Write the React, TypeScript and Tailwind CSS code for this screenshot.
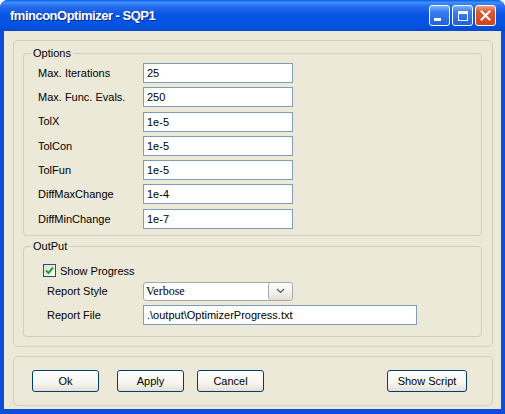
import React from 'react';

const fields = [
  { label: 'Max. Iterations', value: '25' },
  { label: 'Max. Func. Evals.', value: '250' },
  { label: 'TolX', value: '1e-5' },
  { label: 'TolCon', value: '1e-5' },
  { label: 'TolFun', value: '1e-5' },
  { label: 'DiffMaxChange', value: '1e-4' },
  { label: 'DiffMinChange', value: '1e-7' },
];

function CaptionButton({ kind }: { kind: 'min' | 'max' | 'close' }) {
  const bg =
    kind === 'close'
      ? 'bg-[linear-gradient(180deg,#f0a080_0%,#e0582f_30%,#d2421c_100%)]'
      : 'bg-[linear-gradient(180deg,#7fb2ff_0%,#3b7ff0_30%,#1f5fe0_100%)]';
  return (
    <div className={`flex h-[21px] w-[21px] items-center justify-center rounded-[3px] border border-white ${bg}`}>
      {kind === 'min' && <div className="mt-[8px] mr-[4px] h-[3px] w-[7px] bg-white" />}
      {kind === 'max' && <div className="h-[10px] w-[10px] border border-t-[3px] border-white" />}
      {kind === 'close' && (
        <svg width="11" height="11" viewBox="0 0 11 11">
          <path d="M1.5 1.5 L9.5 9.5 M9.5 1.5 L1.5 9.5" stroke="white" strokeWidth="2" strokeLinecap="square" />
        </svg>
      )}
    </div>
  );
}

function XpButton({ children, className = '' }: { children: React.ReactNode; className?: string }) {
  return (
    <button
      className={`h-[22px] rounded-[3px] border border-[#003c74] bg-[linear-gradient(180deg,#ffffff_0%,#f6f5f0_60%,#e3e0d4_100%)] text-[11px] text-black ${className}`}
    >
      {children}
    </button>
  );
}

export default function App() {
  return (
    <div className="h-[414px] w-[505px] bg-white font-['Liberation_Sans',Arial,sans-serif] text-[11px] text-black">
      <div className="flex h-full flex-col rounded-t-[8px] bg-[#0b4fd8]">
        {/* Title bar */}
        <div className="flex h-[31px] shrink-0 items-center rounded-t-[8px] bg-[linear-gradient(180deg,#0a5ee8_0%,#3d8ffa_8%,#2a6eec_20%,#0a56e4_45%,#0354e3_80%,#0048d2_100%)] pl-[10px] pr-[9px]">
          <span className="flex-1 text-[13px] font-bold tracking-[-0.5px] text-white [text-shadow:1px_1px_0_#0a2a8a]">
            fminconOptimizer - SQP1
          </span>
          <div className="flex gap-[2px]">
            <CaptionButton kind="min" />
            <CaptionButton kind="max" />
            <CaptionButton kind="close" />
          </div>
        </div>

        {/* Body */}
        <div className="mx-[4px] mb-[5px] flex-1 bg-[#ece9d8] pb-[3px] pt-[9px]">
          <div className="ml-[9px] mr-[8px] rounded-[5px] border border-[#d0d0bf] pb-[9px] pl-[9px] pr-[10px] pt-[6px]">
            {/* Options */}
            <fieldset className="rounded-[4px] border border-[#d0d0bf] pb-[6px] pt-[3px]">
              <legend className="ml-[7px] px-[2px] leading-[13px]">Options</legend>
              <div className="flex flex-col gap-[4.3px]">
                {fields.map((f) => (
                  <div key={f.label} className="flex h-[20px] items-center">
                    <span className="w-[119px] pl-[14px]">{f.label}</span>
                    <input
                      readOnly
                      defaultValue={f.value}
                      className="h-[20px] w-[150px] border border-[#7f9db9] bg-white px-[3px] outline-none"
                    />
                  </div>
                ))}
              </div>
            </fieldset>

            {/* OutPut */}
            <fieldset className="mt-[4px] rounded-[4px] border border-[#d0d0bf] pb-[11px]">
              <legend className="ml-[7px] px-[2px] leading-[13px]">OutPut</legend>
              <div className="mt-[10px] flex h-[16px] items-center pl-[19px]">
                <div className="flex h-[13px] w-[13px] items-center justify-center border border-[#1c5180] bg-[linear-gradient(135deg,#dcdcd7_0%,#ffffff_100%)]">
                  <svg width="9" height="9" viewBox="0 0 9 9">
                    <path d="M1 4.5 L3.5 7 L8 1.5" fill="none" stroke="#21a121" strokeWidth="2" />
                  </svg>
                </div>
                <span className="ml-[4px]">Show Progress</span>
              </div>
              <div className="mt-[3px] flex h-[19px] items-center">
                <span className="w-[119px] pl-[23px]">Report Style</span>
                <div className="flex h-[19px] w-[150px] overflow-hidden rounded-[3px] border border-[#a7a6aa] bg-white">
                  <span className="flex-1 pl-[2px] font-['Liberation_Serif','Times_New_Roman',serif] text-[12px] leading-[17px]">
                    Verbose
                  </span>
                  <div className="flex w-[24px] items-center justify-center rounded-[3px] border-l border-[#a7a6aa] bg-[linear-gradient(180deg,#ffffff_0%,#f1f0ea_60%,#e2dfd3_100%)]">
                    <svg width="9" height="6" viewBox="0 0 9 6">
                      <path d="M1 1 L4.5 4.5 L8 1" fill="none" stroke="#4d5a6e" strokeWidth="1.2" />
                    </svg>
                  </div>
                </div>
              </div>
              <div className="mt-[4px] flex h-[20px] items-center">
                <span className="w-[119px] pl-[23px]">Report File</span>
                <input
                  readOnly
                  defaultValue=".\output\OptimizerProgress.txt"
                  className="h-[20px] w-[274px] border border-[#7f9db9] bg-white px-[3px] outline-none"
                />
              </div>
            </fieldset>
          </div>

          {/* Buttons */}
          <div className="ml-[9px] mr-[8px] mt-[9px] flex h-[50px] items-center rounded-[5px] border border-[#d0d0bf]">
            <XpButton className="ml-[18px] w-[67px]">Ok</XpButton>
            <XpButton className="ml-[18px] w-[67px]">Apply</XpButton>
            <XpButton className="ml-[13px] w-[67px]">Cancel</XpButton>
            <XpButton className="ml-auto mr-[25px] w-[80px]">Show Script</XpButton>
          </div>
        </div>
      </div>
    </div>
  );
}
